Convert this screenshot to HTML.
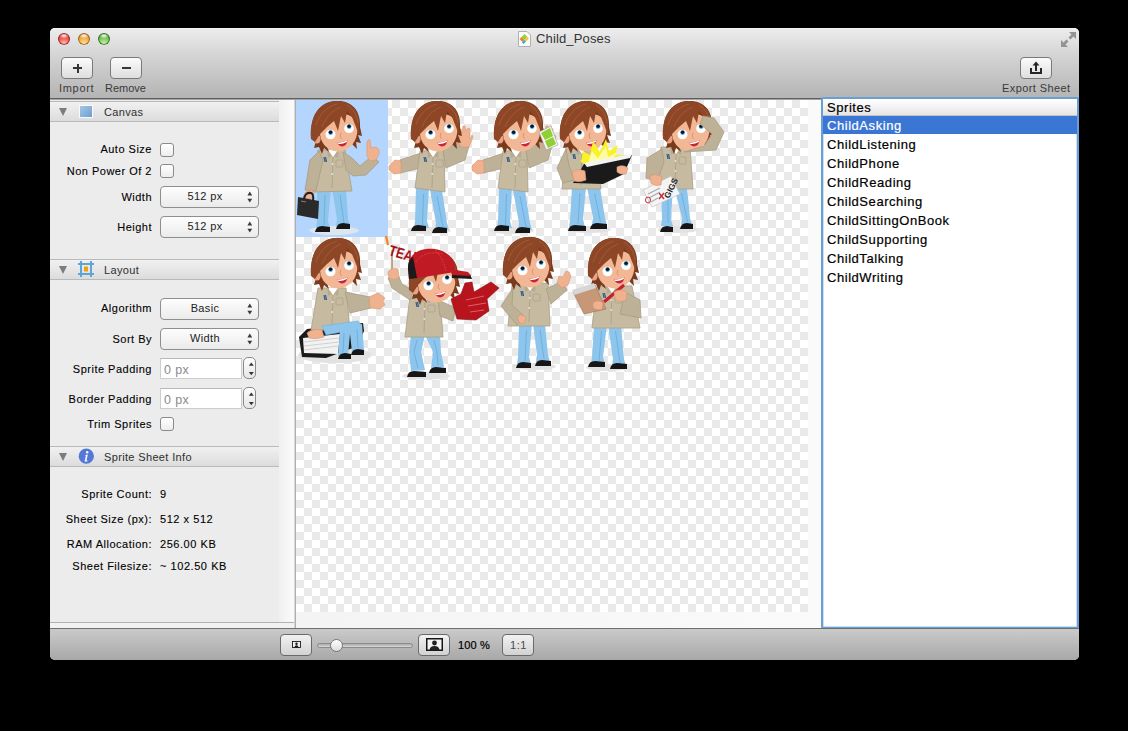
<!DOCTYPE html>
<html><head><meta charset="utf-8">
<style>
*{margin:0;padding:0;box-sizing:border-box}
html,body{width:1128px;height:731px;background:#000;overflow:hidden;font-family:"Liberation Sans",sans-serif;}
body{position:relative}
.a{position:absolute}
#win{position:absolute;left:50px;top:28px;width:1029px;height:632px;border-radius:5px 5px 5px 5px;overflow:hidden;background:#ececec}
#tb{position:absolute;left:50px;top:28px;width:1029px;height:71px;border-radius:5px 5px 0 0;background:linear-gradient(#ececec,#d6d6d6 35%,#b6b6b6 96%);border-top:1px solid #f4f4f4;border-bottom:1px solid #5f5f5f}
.light{position:absolute;width:12px;height:12px;border-radius:50%;box-shadow:inset 0 0 0 0.5px rgba(0,0,0,.35)}
.tbtn{position:absolute;width:32px;height:22px;border:1px solid #7a7a7a;border-radius:4px;background:linear-gradient(#fbfbfb,#dedede)}
.tlab{position:absolute;font-size:11px;color:#3a3a3a;white-space:nowrap;line-height:14px}
.hdr{position:absolute;left:50px;width:229px;height:21px;background:linear-gradient(#f1f1f1,#dcdcdc);border-top:1px solid #b9b9b9;border-bottom:1px solid #b9b9b9}
.tri{position:absolute;left:8.8px;top:6px;width:0;height:0;border-left:4.8px solid transparent;border-right:4.8px solid transparent;border-top:8px solid #7c7c7c}
.htxt{position:absolute;left:54px;top:4px;font-size:11px;letter-spacing:.35px;color:#2e2e2e;line-height:13px}
.lbl{position:absolute;font-size:11px;letter-spacing:.5px;color:#000;-webkit-text-stroke:.1px #000;text-align:right;white-space:nowrap;line-height:13px;right:976px}
.val{position:absolute;left:160px;font-size:11px;letter-spacing:.55px;color:#000;-webkit-text-stroke:.1px #000;white-space:nowrap;line-height:13px}
.cb{position:absolute;left:160px;width:14px;height:14px;border:1px solid #8a8a8a;border-radius:3px;background:linear-gradient(#fff,#ededed)}
.pop{position:absolute;left:160px;width:99px;height:22px;border:1px solid #8e8e8e;border-radius:4px;background:linear-gradient(#fdfdfd,#ebebeb)}
.pop span{position:absolute;left:0;width:88px;top:3px;text-align:center;font-size:11px;letter-spacing:.35px;color:#222;line-height:13px}
.arr{position:absolute;left:86px;width:0;height:0;border-left:3px solid transparent;border-right:3px solid transparent}
.au{top:5px;border-bottom:3.5px solid #3a3a3a;border-left-width:2.8px;border-right-width:2.8px}
.ad{top:12px;border-top:3.5px solid #3a3a3a;border-left-width:2.8px;border-right-width:2.8px}
.tf{position:absolute;left:160px;width:82px;height:21px;background:#fff;border:1px solid #cdcdcd;border-top-color:#b8b8b8}
.tf span{position:absolute;left:3px;top:4px;font-size:12.5px;letter-spacing:.4px;color:#8a8a8a;line-height:14px}
.stp{position:absolute;left:243px;width:13px;height:22px;border:1px solid #8a8a8a;border-radius:5px;background:linear-gradient(#fdfdfd,#e6e6e6)}
.stp .au{left:3px;top:4px;border-bottom-width:3.5px;border-left-width:2.8px;border-right-width:2.8px}
.stp .ad{left:3px;top:13px;border-top-width:3.5px;border-left-width:2.8px;border-right-width:2.8px}
#sheet{position:absolute;left:296px;top:100px;width:512px;height:512px;
 background:conic-gradient(#fff 25%,#e9e9e9 0 50%,#fff 0 75%,#e9e9e9 0) 0 0/16px 16px}
.row{position:absolute;left:823px;width:254px;height:18px;font-size:13px;letter-spacing:.55px;color:#000;-webkit-text-stroke:.2px currentColor;padding-left:4px;line-height:20px;white-space:nowrap;overflow:hidden}
.bbtn{position:absolute;top:634px;width:32px;height:22px;border:1px solid #6a6a6a;border-radius:4px;background:linear-gradient(#f2f2f2,#d2d2d2)}
</style></head><body>
<div id="win"></div>
<div id="tb"></div>
<!-- traffic lights -->
<div class="light" style="left:58px;top:33px;background:radial-gradient(ellipse 45% 25% at 50% 22%,rgba(255,255,255,.95),rgba(255,255,255,0)),radial-gradient(circle at 50% 90%,#ffc4bc 0,#f2544a 50%,#c72c24 85%);box-shadow:inset 0 0 0 1px rgba(110,25,25,.75)"></div>
<div class="light" style="left:78px;top:33px;background:radial-gradient(ellipse 45% 25% at 50% 22%,rgba(255,255,255,.95),rgba(255,255,255,0)),radial-gradient(circle at 50% 90%,#ffe8a0 0,#f3a944 50%,#c77818 85%);box-shadow:inset 0 0 0 1px rgba(120,70,15,.75)"></div>
<div class="light" style="left:98px;top:33px;background:radial-gradient(ellipse 45% 25% at 50% 22%,rgba(255,255,255,.95),rgba(255,255,255,0)),radial-gradient(circle at 50% 90%,#d4f4b8 0,#74c456 50%,#3a8a26 85%);box-shadow:inset 0 0 0 1px rgba(30,80,20,.75)"></div>
<!-- title -->
<svg class="a" style="left:517px;top:30px" width="15" height="18" viewBox="0 0 15 18"><path d="M1.5,1.5 L10,1.5 L13.5,5 L13.5,16.5 L1.5,16.5 Z" fill="#fbfbfb" stroke="#b0b0b0"/><path d="M7.5,4 L10.5,7 L7.5,10 L4.5,7 Z" fill="#9ccf3c"/><path d="M4.5,7 L7.5,10 L5.5,12 L2.5,9 Z" fill="#f08030"/><path d="M10.5,7 L12,8.5 L9,11.5 L7.5,10 Z" fill="#f4c830"/><path d="M7.5,10 L9,11.5 L6.5,14 L5,12.5 Z" fill="#30a8e0"/></svg>
<div class="a" style="left:536px;top:31px;font-size:13px;letter-spacing:.15px;color:#333;line-height:16px">Child_Poses</div>
<!-- toolbar -->
<div class="tbtn" style="left:61px;top:57px"></div>
<div class="a" style="left:73px;top:67px;width:9px;height:2px;background:#353535"></div>
<div class="a" style="left:76.5px;top:63.5px;width:2px;height:9px;background:#353535"></div>
<div class="tlab" style="left:59px;top:81px;letter-spacing:.7px">Import</div>
<div class="tbtn" style="left:110px;top:57px"></div>
<div class="a" style="left:122px;top:67px;width:9px;height:2px;background:#353535"></div>
<div class="tlab" style="left:105px;top:81px">Remove</div>
<div class="tbtn" style="left:1020px;top:57px"></div>
<div class="tlab" style="left:1002px;top:81px;letter-spacing:.4px">Export Sheet</div>
<svg class="a" style="left:1028px;top:60px" width="16" height="16" viewBox="0 0 16 16"><path d="M2,8 L4,8 L4,12 L12,12 L12,8 L14,8 L14,14 L2,14 Z" fill="#262626"/><rect x="7" y="4" width="2" height="7" fill="#262626"/><path d="M4.5,5.5 L8,1.5 L11.5,5.5 Z" fill="#262626"/></svg>
<svg class="a" style="left:1060px;top:31px" width="17" height="17" viewBox="0 0 17 17"><g fill="#939393"><path d="M9,1 L16,1 L16,8 L13.5,5.5 L10.5,8.5 L8.5,6.5 L11.5,3.5 Z"/><path d="M1,16 L1,9 L3.5,11.5 L6.5,8.5 L8.5,10.5 L5.5,13.5 L8,16 Z"/></g></svg>

<!-- left panel bg -->
<div class="a" style="left:50px;top:99px;width:229px;height:524px;background:#ececec"></div>
<div class="a" style="left:50px;top:622px;width:245px;height:1px;background:#b0b0b0"></div>
<div class="a" style="left:50px;top:623px;width:245px;height:5px;background:#f2f2f2"></div>
<div class="a" style="left:279px;top:99px;width:15px;height:523px;background:linear-gradient(90deg,#f0f0f0,#fbfbfb)"></div>
<div class="a" style="left:294px;top:99px;width:1px;height:529px;background:#d6d6d6"></div><div class="a" style="left:295px;top:99px;width:1px;height:529px;background:#afafaf"></div>

<div class="hdr" style="top:101px"><div class="tri"></div><div class="htxt">Canvas</div></div>
<div class="a" style="left:79px;top:105px;width:14px;height:13px;background:#fafafa"></div><div class="a" style="left:80px;top:106px;width:12px;height:11px;background:linear-gradient(135deg,#a6c6e6,#6c9fd0)"></div>
<div class="lbl" style="top:143px">Auto Size</div>
<div class="cb" style="top:143px"></div>
<div class="lbl" style="top:165px">Non Power Of 2</div>
<div class="cb" style="top:164px"></div>
<div class="lbl" style="top:191px">Width</div>
<div class="pop" style="top:186px"><span>512 px</span><svg class="a" style="left:85px;top:3px" width="8" height="14" viewBox="0 0 8 14"><path d="M1.4,5.4 L3.8,1.6 L6.2,5.4 Z M1.4,8.8 L3.8,12.6 L6.2,8.8 Z" fill="#3a3a3a"/></svg></div>
<div class="lbl" style="top:221px">Height</div>
<div class="pop" style="top:216px"><span>512 px</span><svg class="a" style="left:85px;top:3px" width="8" height="14" viewBox="0 0 8 14"><path d="M1.4,5.4 L3.8,1.6 L6.2,5.4 Z M1.4,8.8 L3.8,12.6 L6.2,8.8 Z" fill="#3a3a3a"/></svg></div>

<div class="hdr" style="top:259px"><div class="tri"></div><div class="htxt">Layout</div></div>
<svg class="a" style="left:78px;top:260px" width="17" height="18" viewBox="0 0 17 18"><g fill="#5aa6d6"><rect x="2" y="1" width="2" height="16"/><rect x="12" y="1" width="2" height="16"/><rect x="0" y="3" width="16" height="2"/><rect x="0" y="13" width="16" height="2"/></g><rect x="6" y="6.5" width="4" height="5" rx="0.5" fill="#f2a206"/></svg>
<div class="lbl" style="top:302px">Algorithm</div>
<div class="pop" style="top:298px"><span>Basic</span><svg class="a" style="left:85px;top:3px" width="8" height="14" viewBox="0 0 8 14"><path d="M1.4,5.4 L3.8,1.6 L6.2,5.4 Z M1.4,8.8 L3.8,12.6 L6.2,8.8 Z" fill="#3a3a3a"/></svg></div>
<div class="lbl" style="top:333px">Sort By</div>
<div class="pop" style="top:328px"><span>Width</span><svg class="a" style="left:85px;top:3px" width="8" height="14" viewBox="0 0 8 14"><path d="M1.4,5.4 L3.8,1.6 L6.2,5.4 Z M1.4,8.8 L3.8,12.6 L6.2,8.8 Z" fill="#3a3a3a"/></svg></div>
<div class="lbl" style="top:363px">Sprite Padding</div>
<div class="tf" style="top:358px"><span>0 px</span></div>
<div class="stp" style="top:357px"><svg class="a" style="left:3.5px;top:3px" width="7" height="16" viewBox="0 0 7 16"><path d="M0.8,4.8 L3.3,1.6 L5.8,4.8 Z M0.8,11 L3.3,14.2 L5.8,11 Z" fill="#353535"/></svg></div>
<div class="lbl" style="top:393px">Border Padding</div>
<div class="tf" style="top:388px"><span>0 px</span></div>
<div class="stp" style="top:387px"><svg class="a" style="left:3.5px;top:3px" width="7" height="16" viewBox="0 0 7 16"><path d="M0.8,4.8 L3.3,1.6 L5.8,4.8 Z M0.8,11 L3.3,14.2 L5.8,11 Z" fill="#353535"/></svg></div>
<div class="lbl" style="top:418px">Trim Sprites</div>
<div class="cb" style="top:417px"></div>

<div class="hdr" style="top:446px"><div class="tri"></div><div class="htxt">Sprite Sheet Info</div></div>
<svg class="a" style="left:78px;top:448px" width="17" height="17" viewBox="0 0 17 17"><circle cx="8.3" cy="8.2" r="7.6" fill="#5478d8"/><circle cx="9.2" cy="4.2" r="1.2" fill="#fff"/><path d="M7.6,6.8 L9.8,6.8 L8.4,12.4 L9.6,12.4 L9.3,13.4 L6.6,13.4 L7.9,7.8 L7.3,7.8 Z" fill="#fff"/></svg>
<div class="lbl" style="top:488px">Sprite Count:</div><div class="val" style="top:488px">9</div>
<div class="lbl" style="top:513px">Sheet Size (px):</div><div class="val" style="top:513px">512 x 512</div>
<div class="lbl" style="top:538px">RAM Allocation:</div><div class="val" style="top:538px">256.00 KB</div>
<div class="lbl" style="top:560px">Sheet Filesize:</div><div class="val" style="top:560px">~ 102.50 KB</div>

<!-- canvas -->
<div class="a" style="left:296px;top:99px;width:526px;height:529px;background:linear-gradient(90deg,#f4f4f4,#fafafa)"></div>
<div id="sheet"></div>
<div class="a" style="left:50px;top:99px;width:771px;height:1px;background:#a4a4a4"></div>
<svg class="a" style="left:296px;top:100px" width="512" height="512" viewBox="296 100 512 512">
<defs><g id="head">
 <path d="M1,36 C-2,16 8,1 25,0 C41,-1 50,10 49,26 L51,35 L47,34 L50,42 L45,41 L46,48 L41,43 L40,38 L30,30 L15,42 L18,51 L13,47 L11,53 L8,46 L3,47 L5,40 Z" fill="#7a3a1c"/>
 <ellipse cx="6" cy="38" rx="3.6" ry="4.6" fill="#e9a384"/>
 <path d="M9,29 C8,42 17,50.5 28,50.5 C39,49.5 46.5,40 46.5,28 C46.5,18 39,12 29,13 C18,14 10,19 9,29 Z" fill="#f2b794"/>
 <path d="M0,38 C-2,14 10,0 25,0 C40,0 50,10 48,26 L48,34 L45,26 L41,16 L36,10 L34,22 L30,15 L27,30 L23,20 L16,26 L9,33 L4,41 Z" fill="#8e4726"/>
 <path d="M5,24 C9,12 16,6 26,3 M11,26 C15,16 22,9 30,6 M36,4 C42,8 46,14 47,22" stroke="#a65e38" stroke-width=".8" fill="none"/>
 <ellipse cx="19.5" cy="33.5" rx="5" ry="4.8" fill="#fff"/>
 <ellipse cx="38" cy="27.5" rx="4.8" ry="4.6" fill="#fff"/>
 <circle cx="19.6" cy="31.6" r="2.4" fill="#4aa6de"/>
 <circle cx="38.1" cy="25.6" r="2.4" fill="#4aa6de"/>
 <circle cx="19.6" cy="31.2" r="1.7" fill="#0e141c"/>
 <circle cx="38.1" cy="25.2" r="1.7" fill="#0e141c"/>
 <path d="M30,32 Q28,36.5 31,37.5" stroke="#d4906e" stroke-width=".9" fill="none"/>
 <path d="M26,41 Q31.5,42 36.5,39 Q35.5,45.5 31,45.5 Q27.5,45 26,41 Z" fill="#c8243a"/>
 <path d="M26.3,41.2 Q31.5,42.2 36.2,39.3 L35.8,41 Q31,43.6 27,42.8 Z" fill="#fff"/>
</g></defs>
<style>.j{fill:#c6bba1}.js{fill:#bdb197}.sk{fill:#f0b28e}.pa{fill:#8ec5ec}.sh{fill:#161616}.sd{fill:#e2e2e2}.wh{fill:#fff}</style>
<rect x="296" y="100" width="92" height="137" fill="#b4d5fd"/>
<ellipse cx="334" cy="230.5" rx="24.5" ry="4.5" fill="#dde5ef"/>
<path d="M317,189 L331,189 L328,221 L330,228 L316,228 L317,221 Z M332,189 L346,189 L348,219 L350,226 L336,226 L337,219 Z" class="pa"/><path d="M325.0,195 L324.0,225 M340.0,195 L344.0,223" stroke="#6eb0e2" stroke-width="1" fill="none"/>
<path d="M315,232 Q316,226 322,226 L330,227 L330,232 Z M336,229 Q337,223 343,223 L350,224 L350,229 Z" class="sh"/>
<path d="M318,150 L345,150 L352,191 L312,192 Z" class="j" stroke="#aa9e85" stroke-width=".8"/><path d="M328,150 L333,157 L338,150 Z" class="wh"/><path d="M327,149 L332,156 L328,158 Z M339,149 L334,156 L338,158 Z" fill="#b6aa90"/><path d="M333,157 L332,188" stroke="#a99d84" stroke-width=".8"/><circle cx="332.5" cy="164" r="1" fill="#e8e2d4"/><circle cx="332.3" cy="174" r="1" fill="#e8e2d4"/><rect x="336" y="160" width="7" height="7" rx="1" fill="none" stroke="#a99d84" stroke-width=".7"/><path d="M324,157 L325,162 M325.5,157 L326.5,162" stroke="#2a5a90" stroke-width="1.2"/>
<path d="M343,152 L352,158 L360,166 L372,156 L379,162 L366,175 L353,176 L346,170 Z" class="js" stroke="#a89c83" stroke-width=".8"/>
<path d="M319,151 L323,160 L316,191 L305,190 L310,160 Z" class="js" stroke="#a89c83" stroke-width=".8"/>
<path d="M367,150 L367,142 Q368,139 370,140 L371,148 L376,147 Q380,149 379,154 L376,160 L370,161 Q366,157 367,150 Z" class="sk" stroke="#d9946e" stroke-width=".6"/>
<path d="M304,194 Q306,190 312,190 Q315,193 313,198 L306,199 Z" class="sk" stroke="#d9946e" stroke-width=".6"/>
<path d="M298,197 L319,201 L318,219 L297,215 Z" fill="#2a2a2a"/>
<path d="M304,199 Q305,192 311,193 Q314,194 313,201" stroke="#222" stroke-width="2" fill="none"/>
<path d="M301,201 L306,202" stroke="#8a8060" stroke-width="1.2"/>
<use href="#head" transform="translate(311,101) scale(1)"/>
<g id="listen">
<ellipse cx="429" cy="230.5" rx="22" ry="3.5" class="sd"/>
<path d="M416,188 L429,188 L427,221 L429,228 L414,228 L415,221 Z M430,190 L442,190 L447,223 L449,230 L435,230 L436,223 Z" class="pa"/><path d="M423.5,194 L422.5,225 M437.0,196 L443.0,227" stroke="#6eb0e2" stroke-width="1" fill="none"/>
<path d="M411,231 Q412,225 418,225 L426,226 L426,231 Z M432,233 Q433,227 439,227 L447,228 L447,233 Z" class="sh"/>
<path d="M424,152 L400,160 L400,173 L421,168 Z" class="js" stroke="#a89c83" stroke-width=".8"/>
<path d="M420,151 L444,150 L445,192 L415,188 Z" class="j" stroke="#aa9e85" stroke-width=".8"/><path d="M428,150 L433,157 L438,150 Z" class="wh"/><path d="M427,149 L432,156 L428,158 Z M439,149 L434,156 L438,158 Z" fill="#b6aa90"/><path d="M433,157 L432,188" stroke="#a99d84" stroke-width=".8"/><circle cx="432.5" cy="164" r="1" fill="#e8e2d4"/><circle cx="432.3" cy="174" r="1" fill="#e8e2d4"/><rect x="436" y="160" width="7" height="7" rx="1" fill="none" stroke="#a99d84" stroke-width=".7"/><path d="M424,157 L425,162 M425.5,157 L426.5,162" stroke="#2a5a90" stroke-width="1.2"/>
<path d="M443,151 L460,140 L469,146 L465,160 L446,168 Z" class="js" stroke="#a89c83" stroke-width=".8"/>
<path d="M389,166 L395,160 L401,161 L401,173 L394,174 L389,170 Z" class="sk" stroke="#d9946e" stroke-width=".6"/>
<path d="M459,143 L459,130 L461,129 L462,133 L463,126 L465,126 L466,131 L468,128 L470,129 L470,139 L472,135 L473,137 L469,147 L461,147 Z" class="sk" stroke="#d9946e" stroke-width=".6"/>
<use href="#head" transform="translate(411,101) scale(1)"/>
</g>
<use href="#listen" transform="translate(83,0)"/>
<path d="M539,132 L551,126 L558,145 L546,150 Z" fill="#f2f2f2" stroke="#9a9a9a" stroke-width=".6"/>
<path d="M541,133 L550,128 L553,136 L545,140 Z M545,141 L553,137 L556,144 L548,148 Z" fill="#8fd032"/>
<ellipse cx="589" cy="229.5" rx="22" ry="3.5" class="sd"/>
<path d="M572,187 L586,187 L583,220 L585,227 L569,227 L570,220 Z M587,187 L600,187 L605,218 L607,225 L592,225 L593,218 Z" class="pa"/><path d="M580.0,193 L578.0,224 M594.5,193 L600.5,222" stroke="#6eb0e2" stroke-width="1" fill="none"/>
<path d="M568,231 Q569,225 575,225 L586,226 L586,231 Z M590,229 Q591,223 597,223 L607,224 L607,229 Z" class="sh"/>
<path d="M566,147 L596,147 L601,189 L562,189 Z" class="j" stroke="#aa9e85" stroke-width=".8"/><path d="M577,147 L582,154 L587,147 Z" class="wh"/><path d="M576,146 L581,153 L577,155 Z M588,146 L583,153 L587,155 Z" fill="#b6aa90"/><path d="M582,154 L581,185" stroke="#a99d84" stroke-width=".8"/><circle cx="581.5" cy="161" r="1" fill="#e8e2d4"/><circle cx="581.3" cy="171" r="1" fill="#e8e2d4"/><rect x="585" y="157" width="7" height="7" rx="1" fill="none" stroke="#a99d84" stroke-width=".7"/><path d="M573,154 L574,159 M574.5,154 L575.5,159" stroke="#2a5a90" stroke-width="1.2"/>
<path d="M566,149 L557,168 L563,183 L574,180 L569,165 Z" class="js" stroke="#a89c83" stroke-width=".8"/>
<use href="#head" transform="translate(560,101) scale(1)"/>
<path d="M581,162 L583,151 L590,155 L593,141 L600,152 L606,139 L609,151 L618,145 L615,155 L627,155 L614,163 L590,168 Z" fill="#f8f226"/><path d="M588,163 L592,151 L598,158 L606,146 L608,157 L616,153 L612,162 Z" fill="#fdfba8"/>
<path d="M573,183 L584,164 L632,155 L624,174 L603,184 Z" fill="#1a1a1a"/>
<path d="M584,163 L632,154 L630,158 L587,167 Z" fill="#f3f3f3"/>
<path d="M572,172 Q578,168 585,171 L586,180 Q580,183 574,181 Z" class="sk" stroke="#d9946e" stroke-width=".6"/>
<path d="M617,167 Q623,164 628,168 L626,174 Q620,175 617,172 Z" class="sk" stroke="#d9946e" stroke-width=".6"/>
<ellipse cx="678" cy="229.5" rx="20" ry="3.5" class="sd"/>
<path d="M661,187 L673,187 L671,219 L673,226 L661,226 L662,219 Z M674,187 L687,187 L690,218 L692,225 L681,225 L682,218 Z" class="pa"/><path d="M668.0,193 L668.0,223 M681.5,193 L687.5,222" stroke="#6eb0e2" stroke-width="1" fill="none"/>
<path d="M660,232 Q661,226 667,226 L673,227 L673,232 Z M680,229 Q681,223 687,223 L693,224 L693,229 Z" class="sh"/>
<path d="M661,147 L690,147 L693,189 L656,189 Z" class="j" stroke="#aa9e85" stroke-width=".8"/><path d="M671,147 L676,154 L681,147 Z" class="wh"/><path d="M670,146 L675,153 L671,155 Z M682,146 L677,153 L681,155 Z" fill="#b6aa90"/><path d="M676,154 L675,185" stroke="#a99d84" stroke-width=".8"/><circle cx="675.5" cy="161" r="1" fill="#e8e2d4"/><circle cx="675.3" cy="171" r="1" fill="#e8e2d4"/><rect x="679" y="157" width="7" height="7" rx="1" fill="none" stroke="#a99d84" stroke-width=".7"/><path d="M667,154 L668,159 M668.5,154 L669.5,159" stroke="#2a5a90" stroke-width="1.2"/>
<path d="M662,149 L647,158 L646,178 L657,182 L664,162 Z" class="js" stroke="#a89c83" stroke-width=".8"/>
<use href="#head" transform="translate(663,101) scale(1)"/>
<path d="M684,152 L716,150 L724,132 L714,118 L703,116 L700,124 L712,134 L704,146 Z" class="js" stroke="#a89c83" stroke-width=".8"/>
<path d="M643,190 L671,176 L680,194 L652,207 Z" fill="#f4f4f4" stroke="#bbb" stroke-width=".6"/>
<text x="0" y="0" transform="translate(669,199) rotate(-64)" font-family="Liberation Sans" font-weight="bold" font-size="8.5" fill="#1e1e1e">GIGS</text>
<path d="M659,193 L664,199 M659,199 L664,193" stroke="#c0303a" stroke-width="1.5"/>
<path d="M648,194 L660,188 M649,198 L660,192 M651,202 L658,198" stroke="#aaa" stroke-width="1.2"/>
<ellipse cx="648" cy="200" rx="2.5" ry="3" fill="none" stroke="#c0303a" stroke-width="1"/>
<path d="M650,176 Q656,173 662,177 L661,185 Q655,187 651,183 Z" class="sk" stroke="#d9946e" stroke-width=".6"/>
<ellipse cx="335" cy="355" rx="37" ry="8" class="sd"/>
<path d="M299,337 L307,329 L363,323 L364,331 L358,346 L326,358 L302,357 Z" fill="#1a1a1a"/>
<path d="M303,338 L340,334 L338,354 L304,353 Z" fill="#f2f2f2"/>
<path d="M304,342 L339,338 M304,346 L339,342 M304,350 L338,346" stroke="#c8c8c8" stroke-width="0.8"/>
<path d="M318,288 L346,288 L350,330 L311,330 Z" class="j" stroke="#aa9e85" stroke-width=".8"/><path d="M328,288 L333,295 L338,288 Z" class="wh"/><path d="M327,287 L332,294 L328,296 Z M339,287 L334,294 L338,296 Z" fill="#b6aa90"/><path d="M333,295 L332,326" stroke="#a99d84" stroke-width=".8"/><circle cx="332.5" cy="302" r="1" fill="#e8e2d4"/><circle cx="332.3" cy="312" r="1" fill="#e8e2d4"/><rect x="336" y="298" width="7" height="7" rx="1" fill="none" stroke="#a99d84" stroke-width=".7"/><path d="M324,295 L325,300 M325.5,295 L326.5,300" stroke="#2a5a90" stroke-width="1.2"/>
<path d="M345,292 L370,297 L371,308 L350,313 Z" class="js" stroke="#a89c83" stroke-width=".8"/>
<path d="M369,297 L378,293 L385,298 L383,301 L385,305 L380,309 L370,308 Z" class="sk" stroke="#d9946e" stroke-width=".6"/>
<path d="M322,326 L358,321 L362,326 L347,331 L326,335 Z" class="pa" stroke="#6eb0e2" stroke-width=".6"/>
<path d="M340,330 L352,327 L362,324 L364,351 L352,352 L350,334 L348,355 L338,356 Z" class="pa"/>
<path d="M344,333 L343,352 M357,329 L358,348" stroke="#6eb0e2" stroke-width="1"/>
<path d="M338,359 Q339,353 345,353 L351,354 L351,359 Z M351,355 Q352,349 358,349 L364,350 L364,355 Z" class="sh"/>
<path d="M307,333 Q312,328 322,330 L324,337 Q316,340 309,338 Z" class="sk" stroke="#d9946e" stroke-width=".6"/>
<use href="#head" transform="translate(311,238) scale(1)"/>
<ellipse cx="426" cy="376" rx="24" ry="3.5" class="sd"/>
<path d="M411,335 L425,335 L421,352 L425,370 L411,371 L409,352 Z M425,335 L440,335 L441,352 L444,367 L431,368 L433,352 Z" class="pa"/>
<path d="M417,340 L414,352 L418,368 M434,340 L437,352 L438,365" stroke="#6eb0e2" stroke-width="1" fill="none"/>
<path d="M407,377 Q408,371 414,371 L426,372 L426,377 Z M429,373 Q430,367 436,367 L446,368 L446,373 Z" class="sh"/>
<path d="M410,295 L440,295 L443,337 L405,337 Z" class="j" stroke="#aa9e85" stroke-width=".8"/><path d="M420,295 L425,302 L430,295 Z" class="wh"/><path d="M419,294 L424,301 L420,303 Z M431,294 L426,301 L430,303 Z" fill="#b6aa90"/><path d="M425,302 L424,333" stroke="#a99d84" stroke-width=".8"/><circle cx="424.5" cy="309" r="1" fill="#e8e2d4"/><circle cx="424.3" cy="319" r="1" fill="#e8e2d4"/><rect x="428" y="305" width="7" height="7" rx="1" fill="none" stroke="#a99d84" stroke-width=".7"/><path d="M416,302 L417,307 M417.5,302 L418.5,307" stroke="#2a5a90" stroke-width="1.2"/>
<path d="M410,300 L392,288 L388,278 L398,275 L402,284 L416,292 Z" class="js" stroke="#a89c83" stroke-width=".8"/>
<path d="M438,300 L456,308 L453,321 L440,316 Z" class="js" stroke="#a89c83" stroke-width=".8"/>
<path d="M387,240 L392,272" stroke="#f4f4f4" stroke-width="2"/>
<path d="M392,250 L392,272" stroke="#8a5a30" stroke-width="1"/>
<path d="M386,236 L388,245" stroke="#f08a2a" stroke-width="2.4"/>
<text x="0" y="0" transform="translate(388,255) rotate(16)" font-family="Liberation Sans" font-weight="bold" font-size="15" fill="#a8121a" textLength="34" lengthAdjust="spacingAndGlyphs">TEAM</text>
<use href="#head" transform="translate(409,252) scale(1)"/>
<path d="M408,270 C407,254 420,247 435,249 C449,251 456,261 455,272 L418,278 L409,279 Z" fill="#c01a24"/>
<path d="M416,262 C421,254 431,251 442,254 M435,250 C441,256 445,264 446,272" stroke="#e25a62" stroke-width=".7" fill="none" stroke-dasharray="1.4 1.4"/>
<path d="M408,268 C408,262 410,259 413,257 L417,278 L409,279 Z" fill="#1a1a1a"/>
<path d="M452,270 L470,274 L472,279 L452,278 Z" fill="#1a1a1a"/>
<path d="M450,269 L468,272 L471,276 L452,275 Z" fill="#c01a24"/>
<path d="M388,272 Q392,267 398,269 L399,278 Q393,281 389,278 Z" class="sk" stroke="#d9946e" stroke-width=".6"/>
<path d="M451,299 L461,294 L465,283 L472,282 L474,292 L491,282 L499,288 L487,299 L489,311 L476,320 L457,319 Z" fill="#b8141e" stroke="#8e0c14" stroke-width=".6"/>
<path d="M466,300 L484,296 M468,306 L486,303 M470,312 L484,310" stroke="#e06068" stroke-width="1"/>
<ellipse cx="534" cy="366.5" rx="22" ry="3.5" class="sd"/>
<path d="M519,324 L532,324 L529,357 L531,364 L517,364 L518,357 Z M533,324 L545,324 L548,355 L550,362 L536,362 L537,355 Z" class="pa"/><path d="M526.5,330 L525.0,361 M540.0,330 L544.0,359" stroke="#6eb0e2" stroke-width="1" fill="none"/>
<path d="M516,368 Q517,362 523,362 L531,363 L531,368 Z M535,366 Q536,360 542,360 L551,361 L551,366 Z" class="sh"/>
<path d="M512,285 L548,283 L550,326 L508,326 Z" class="j" stroke="#aa9e85" stroke-width=".8"/><path d="M525,284 L530,291 L535,284 Z" class="wh"/><path d="M524,283 L529,290 L525,292 Z M536,283 L531,290 L535,292 Z" fill="#b6aa90"/><path d="M530,291 L529,322" stroke="#a99d84" stroke-width=".8"/><circle cx="529.5" cy="298" r="1" fill="#e8e2d4"/><circle cx="529.3" cy="308" r="1" fill="#e8e2d4"/><rect x="533" y="294" width="7" height="7" rx="1" fill="none" stroke="#a99d84" stroke-width=".7"/><path d="M521,291 L522,296 M522.5,291 L523.5,296" stroke="#2a5a90" stroke-width="1.2"/>
<path d="M513,288 L501,306 L517,325 L525,317 L512,305 Z" class="js" stroke="#a89c83" stroke-width=".8"/>
<path d="M546,289 L562,281 L567,290 L551,304 Z" class="js" stroke="#a89c83" stroke-width=".8"/>
<path d="M557,283 L559,276 L563,277 L566,271 L569,272 L571,276 L568,285 L562,288 Z" class="sk" stroke="#d9946e" stroke-width=".6"/>
<path d="M518,316 Q523,313 526,318 L524,324 Q519,324 518,320 Z" class="sk" stroke="#d9946e" stroke-width=".6"/>
<use href="#head" transform="translate(503,237) scale(1)"/>
<ellipse cx="608" cy="367.5" rx="22" ry="3.5" class="sd"/>
<path d="M594,325 L607,325 L603,357 L605,364 L591,364 L592,357 Z M608,325 L621,325 L624,359 L626,366 L612,366 L613,359 Z" class="pa"/><path d="M601.5,331 L599.0,361 M615.5,331 L620.0,363" stroke="#6eb0e2" stroke-width="1" fill="none"/>
<path d="M588,367 Q589,361 595,361 L605,362 L605,367 Z M610,369 Q611,363 617,363 L627,364 L627,369 Z" class="sh"/>
<path d="M597,286 L632,286 L640,328 L592,328 Z" class="j" stroke="#aa9e85" stroke-width=".8"/><path d="M607,286 L612,293 L617,286 Z" class="wh"/><path d="M606,285 L611,292 L607,294 Z M618,285 L613,292 L617,294 Z" fill="#b6aa90"/><path d="M612,293 L611,324" stroke="#a99d84" stroke-width=".8"/><circle cx="611.5" cy="300" r="1" fill="#e8e2d4"/><circle cx="611.3" cy="310" r="1" fill="#e8e2d4"/><rect x="615" y="296" width="7" height="7" rx="1" fill="none" stroke="#a99d84" stroke-width=".7"/><path d="M603,293 L604,298 M604.5,293 L605.5,298" stroke="#2a5a90" stroke-width="1.2"/>
<path d="M625,292 L640,300 L641,318 L620,314 Z" class="js" stroke="#a89c83" stroke-width=".8"/>
<use href="#head" transform="translate(588,238) scale(1)"/>
<path d="M573,292 L595,285 L606,309 L584,314 Z" fill="#c79878" stroke="#9a7050" stroke-width=".6"/>
<path d="M572,290 L594,283 L596,288 L574,295 Z" fill="#d6d6d6"/>
<path d="M604,302 L624,285" stroke="#c8202a" stroke-width="3"/>
<path d="M593,303 Q598,299 603,303 L602,309 Q596,311 593,307 Z" class="sk" stroke="#d9946e" stroke-width=".6"/>
<path d="M614,292 Q620,288 627,292 L626,300 Q619,303 615,299 Z" class="sk" stroke="#d9946e" stroke-width=".6"/>
</svg>

<!-- list -->
<div class="a" style="left:821px;top:97px;width:258px;height:532px;background:#fff;border:2px solid #6a9fd3;border-radius:2px;box-shadow:inset 0 0 0 0.5px #9cc0e6"></div>
<div class="row" style="top:99px;left:823px;width:254px;height:17px;background:linear-gradient(#fff,#e6e6e6);border-bottom:1px solid #c4c4c4;line-height:18px">Sprites</div>
<div class="row" style="top:116px;background:#3b76d4;color:#fff">ChildAsking</div>
<div class="row" style="top:135px">ChildListening</div>
<div class="row" style="top:154px">ChildPhone</div>
<div class="row" style="top:173px">ChildReading</div>
<div class="row" style="top:192px">ChildSearching</div>
<div class="row" style="top:211px">ChildSittingOnBook</div>
<div class="row" style="top:230px">ChildSupporting</div>
<div class="row" style="top:249px">ChildTalking</div>
<div class="row" style="top:268px">ChildWriting</div>

<!-- bottom bar -->
<div class="a" style="left:50px;top:628px;width:1029px;height:32px;border-radius:0 0 5px 5px;background:linear-gradient(#cacaca,#a8a8a8);border-top:1px solid #6e6e6e"></div>
<div class="bbtn" style="left:280px"></div>
<svg class="a" style="left:292px;top:641px" width="9" height="7" viewBox="0 0 9 7"><rect x="0.5" y="0.5" width="8" height="6" fill="#f0f0f0" stroke="#1a1a1a" stroke-width=".9"/><circle cx="4.5" cy="2.8" r="1.2" fill="#1a1a1a"/><path d="M2.3,6.5 Q2.8,4.3 4.5,4.3 Q6.2,4.3 6.7,6.5 Z" fill="#1a1a1a"/></svg>
<div class="a" style="left:317px;top:643px;width:96px;height:5px;border-radius:3px;background:linear-gradient(#a8a8a8,#d8d8d8);border:1px solid #8c8c8c"></div>
<div class="a" style="left:330px;top:639px;width:13px;height:13px;border-radius:50%;background:linear-gradient(#ffffff,#dcdcdc);border:1px solid #777"></div>
<div class="bbtn" style="left:418px"></div>
<svg class="a" style="left:426px;top:638px" width="17" height="13" viewBox="0 0 17 13"><rect x="0.75" y="0.75" width="15.5" height="11.5" fill="#f4f4f4" stroke="#161616" stroke-width="1.5"/><circle cx="8.5" cy="5" r="2.4" fill="#222"/><path d="M3.5,12 Q4,8 8.5,8 Q13,8 13.5,12 Z" fill="#222"/></svg>
<div class="a" style="left:458px;top:639px;font-size:11px;letter-spacing:.15px;color:#000;-webkit-text-stroke:.2px #000;line-height:13px">100 %</div>
<div class="bbtn" style="left:502px"></div>
<div class="a" style="left:510px;top:639px;font-size:11px;letter-spacing:.6px;color:#4a4a4a;line-height:13px">1:1</div>
</body></html>
